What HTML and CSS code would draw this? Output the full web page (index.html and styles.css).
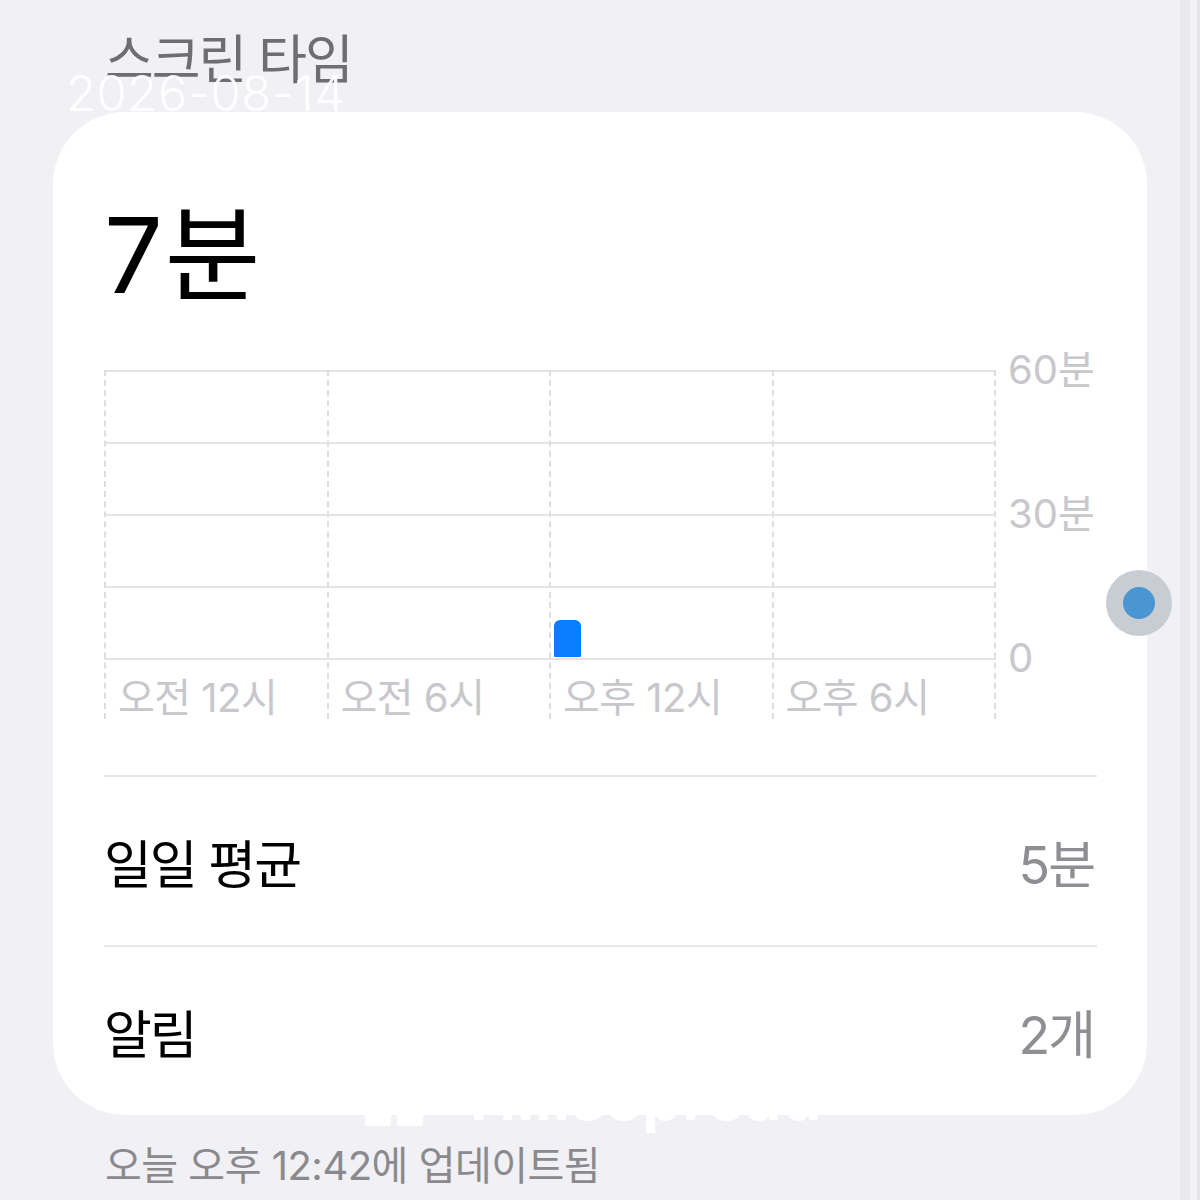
FILE: index.html
```html
<!DOCTYPE html>
<html lang="ko">
<head>
<meta charset="utf-8">
<title>스크린 타임</title>
<link rel="stylesheet" href="styles.css">
</head>
<body>
<div class="screen">
  <h1 class="title">스크린 타임</h1>
  <section class="card">
    <div class="total">7분</div>
    <div class="chart">
      <div class="plot">
        <div class="col"><span class="xlabel">오전 12시</span></div>
        <div class="col"><span class="xlabel">오전 6시</span></div>
        <div class="col"><div class="bar" style="left:3px;top:250px;height:37px"></div><span class="xlabel">오후 12시</span></div>
        <div class="col"><span class="xlabel">오후 6시</span></div>
      </div>
      <div class="yaxis"><span>60분</span><span>30분</span><span>0</span></div>
    </div>
    <div class="row"><span class="label">일일 평균</span><span class="value">5분</span></div>
    <div class="row"><span class="label">알림</span><span class="value">2개</span></div>
  </section>
  <p class="updated">오늘 오후 12:42에 업데이트됨</p>

  <div class="stamp">2026-08-14</div>
  <div class="mark">
    <svg class="mark-icon" width="60" height="60" viewBox="0 0 60 60"><rect x="0" y="8" width="26" height="52" rx="3" fill="#fff"/><rect x="32" y="8" width="26" height="52" rx="3" fill="#fff"/></svg>
    <span>Hillsspread</span>
  </div>
  <div class="handle"><span class="handle-dot"></span></div>
  <div class="edge"></div>
</div>
</body>
</html>
```

FILE: styles.css
```css
html, body {
  margin: 0;
  padding: 0;
}

body {
  background: #f0f0f5;
  font-family: Inter, "Noto Sans CJK KR", sans-serif;
  color: #000;
}

.screen {
  position: relative;
  width: 1200px;
  height: 1200px;
  overflow: hidden;
  box-sizing: border-box;
  padding: 0 53px;
}

.title {
  margin: 0;
  padding: 30px 0 0 52px;
  font-size: 53px;
  font-weight: 400;
  line-height: 60px;
  letter-spacing: -2px;
  color: #6d6d72;
}

.card {
  margin-top: 22px;
  background: #fff;
  border-radius: 72px;
  padding: 0 50px 0 51px;
}

.total {
  padding-top: 83px;
  font-size: 104px;
  font-weight: 400;
  line-height: 120px;
  letter-spacing: 2px;
  color: #000;
}

.chart {
  display: flex;
  margin-top: 55px;
  height: 349px;
}

.plot {
  display: flex;
  width: 892px;
  height: 349px;
  background: repeating-linear-gradient(to bottom, #e4e4e8 0 2px, transparent 2px 72px) top left / 100% 290px no-repeat;
}

.col {
  position: relative;
  flex: 1;
  box-sizing: border-box;
  padding-top: 306px;
  border-left: 2px dashed #dedee2;
}

.col:last-child {
  border-right: 2px dashed #dedee2;
}

.xlabel {
  display: block;
  padding-left: 12px;
  font-size: 40px;
  line-height: 43px;
  letter-spacing: -0.5px;
  color: #c7c7cc;
  white-space: nowrap;
}

.bar {
  position: absolute;
  width: 27px;
  background: #0a7cff;
  border-radius: 6px 6px 1px 1px;
}

.yaxis {
  display: flex;
  flex-direction: column;
  gap: 100px;
  margin: -22px 0 0 12px;
}

.yaxis span {
  display: block;
  height: 44px;
  font-size: 40px;
  line-height: 44px;
  letter-spacing: 0;
  color: #c7c7cc;
  white-space: nowrap;
}

.row {
  display: flex;
  justify-content: space-between;
  align-items: center;
  height: 170px;
  box-sizing: border-box;
  border-top: 2px solid #e6e6eb;
}

.chart + .row {
  margin-top: 56px;
}

.label {
  font-size: 52px;
  letter-spacing: -2px;
  color: #000;
}

.value {
  font-size: 52px;
  letter-spacing: -2px;
  color: #8e8e93;
  padding-right: 3px;
}

.updated {
  margin: 27px 0 0;
  padding-left: 52px;
  font-size: 40px;
  line-height: 48px;
  letter-spacing: -0.5px;
  color: #8a8a8e;
}

.stamp {
  position: absolute;
  left: 66px;
  top: 70px;
  font-size: 49px;
  font-weight: 300;
  line-height: 48px;
  letter-spacing: 0.5px;
  color: rgba(255, 255, 255, 0.95);
}

.mark {
  position: absolute;
  left: 365px;
  top: 1060px;
  display: flex;
  align-items: flex-end;
  gap: 45px;
  color: #fff;
}

.mark span {
  font-size: 62px;
  font-weight: 700;
  line-height: 76px;
  letter-spacing: 1px;
}

.mark-icon {
  display: block;
  margin-bottom: 10px;
}

.handle {
  position: absolute;
  left: 1106px;
  top: 570px;
  width: 66px;
  height: 66px;
  border-radius: 50%;
  background: rgba(196, 202, 209, 0.95);
  display: flex;
  align-items: center;
  justify-content: center;
}

.handle-dot {
  width: 32px;
  height: 32px;
  border-radius: 50%;
  background: #4a96d2;
}

.edge {
  position: absolute;
  right: 0;
  top: 0;
  width: 20px;
  height: 100%;
  background: linear-gradient(to right, #e9e9ee 0 10px, #f3f3f7 10px 17px, #e4e4e9 17px 20px);
}
```
